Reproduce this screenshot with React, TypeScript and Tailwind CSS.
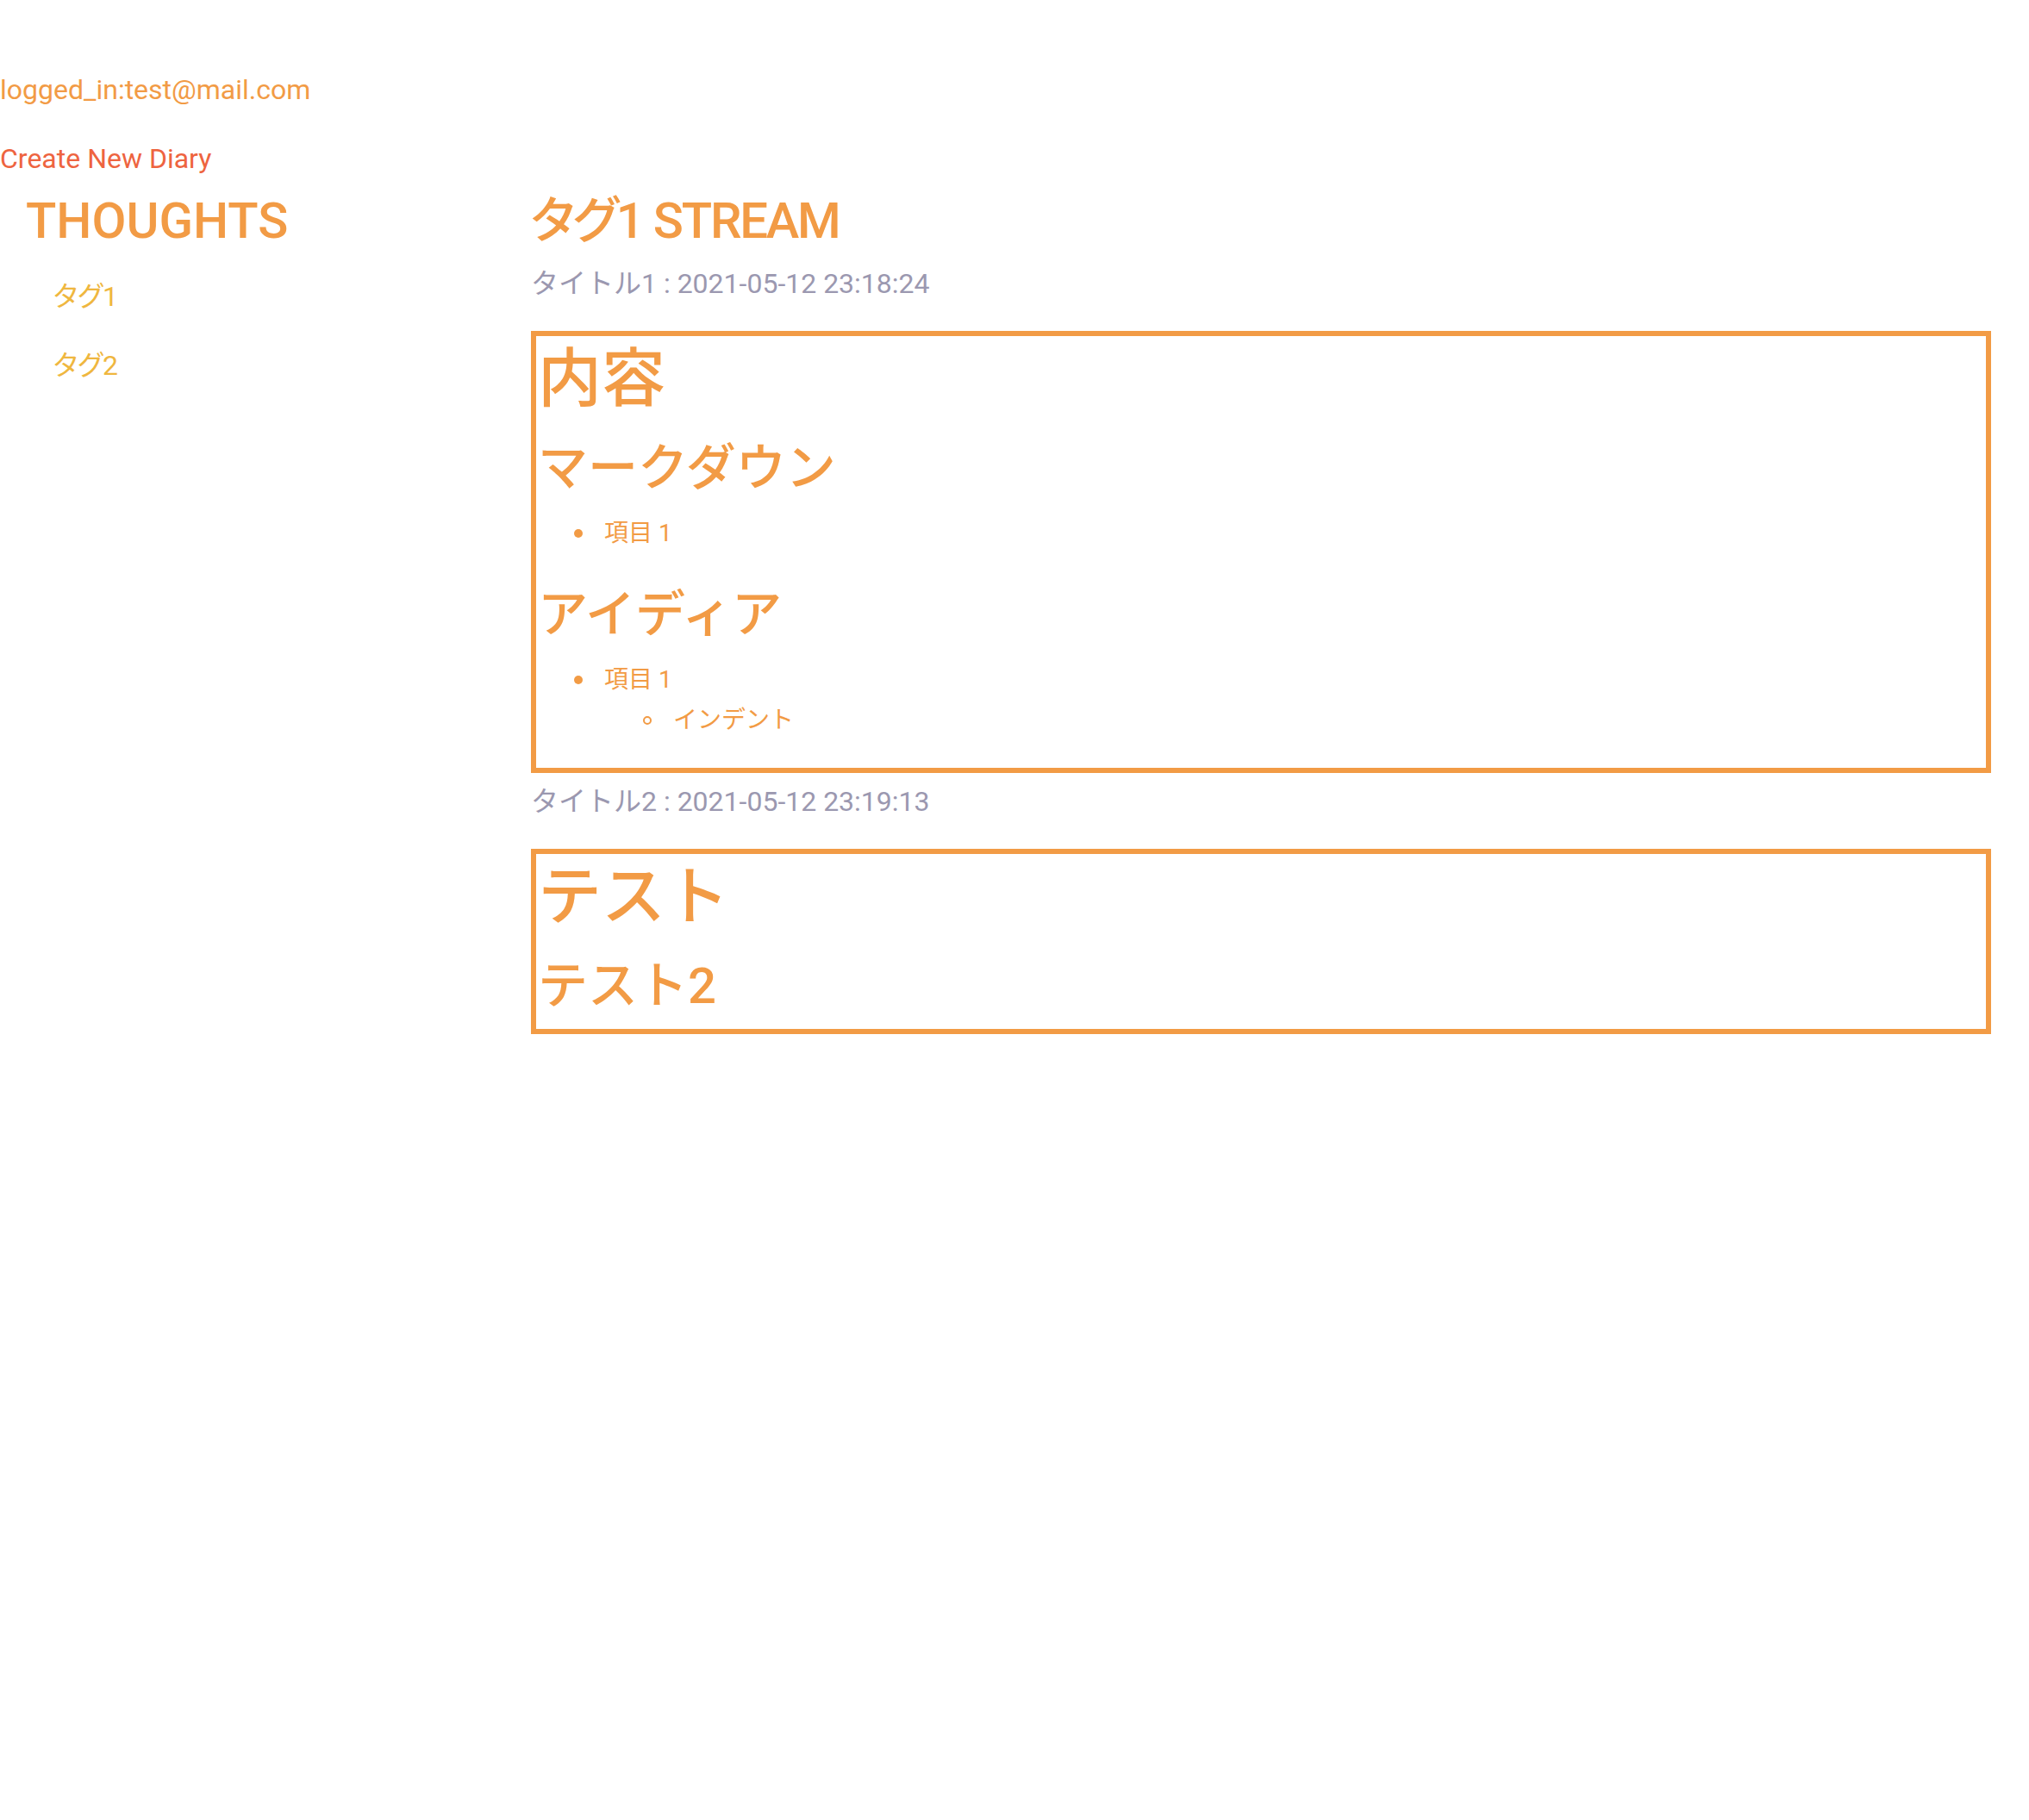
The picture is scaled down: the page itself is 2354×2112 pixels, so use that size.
import React from "react";

type Post = {
  title: string;
  date: string;
  body: React.ReactNode;
};

const H1 = ({ children }: { children: React.ReactNode }) => (
  <h1 className="text-[74px] leading-[100px] font-medium">{children}</h1>
);

const H2 = ({ children }: { children: React.ReactNode }) => (
  <h2 className="mt-[18px] mb-[15px] text-[58px] leading-[70px] font-medium">{children}</h2>
);

// list row with a drawn bullet (disc or circle)
const Item = ({ children, circle }: { children: React.ReactNode; circle?: boolean }) => (
  <div className="flex items-center gap-[25px] text-[28px] leading-[42px]">
    <span
      className={
        circle
          ? "size-[10px] shrink-0 rounded-full border-2 border-[#f29b45]"
          : "size-[10px] shrink-0 rounded-full bg-[#f29b45]"
      }
    />
    <span>{children}</span>
  </div>
);

const posts: Post[] = [
  {
    title: "タイトル1",
    date: "2021-05-12 23:18:24",
    body: (
      <>
        <H1>内容</H1>
        <H2>マークダウン</H2>
        <ul className="mt-[20px] mb-[38px] pl-[42px]">
          <li>
            <Item>項目 1</Item>
          </li>
        </ul>
        <H2>アイディア</H2>
        <ul className="mt-[20px] mb-[34px] pl-[42px]">
          <li>
            <Item>項目 1</Item>
            <ul className="mt-[5px] pl-[80px]">
              <li>
                <Item circle>インデント</Item>
              </li>
            </ul>
          </li>
        </ul>
      </>
    ),
  },
  {
    title: "タイトル2",
    date: "2021-05-12 23:19:13",
    body: (
      <>
        <H1>テスト</H1>
        <H2>テスト2</H2>
      </>
    ),
  },
];

const tags = ["タグ1", "タグ2"];

const Sidebar = () => (
  <aside className="w-[616px] shrink-0 pl-[30px]">
    <h2 className="text-[58px] leading-[58px] font-medium text-[#f29b45]">THOUGHTS</h2>
    <ul className="mt-[35px] flex flex-col gap-[32px] pl-[32px]">
      {tags.map((tag) => (
        <li key={tag}>
          <a className="block text-[32px] leading-[48px] text-[#efb73f] [font-feature-settings:'palt']">
            {tag}
          </a>
        </li>
      ))}
    </ul>
  </aside>
);

const PostCard = ({ post, first }: { post: Post; first: boolean }) => (
  <section className={first ? "mt-[20px]" : "mt-[9px]"}>
    <p className="text-[32px] leading-[48px] text-[#9b98b0]">
      {post.title} : {post.date}
    </p>
    <div className="mt-[31px] border-[6px] border-[#f29b45] px-[2px] text-[#f29b45]">
      {post.body}
    </div>
  </section>
);

export default function App() {
  return (
    <div className="min-h-screen bg-white pt-[80px] font-[Roboto,'Noto_Sans_CJK_JP',sans-serif]">
      <p className="text-[32px] leading-[48px] text-[#f29b45]">logged_in:test@mail.com</p>
      <a className="mt-[32px] block text-[32px] leading-[48px] text-[#ee6440]">Create New Diary</a>
      <div className="mt-[19px] flex">
        <Sidebar />
        <main className="mr-[44px] flex-1">
          <h2 className="text-[58px] leading-[58px] font-medium tracking-[-2.2px] text-[#f29b45] [font-feature-settings:'palt']">
            タグ1 STREAM
          </h2>
          {posts.map((post, i) => (
            <PostCard key={post.title} post={post} first={i === 0} />
          ))}
        </main>
      </div>
    </div>
  );
}
